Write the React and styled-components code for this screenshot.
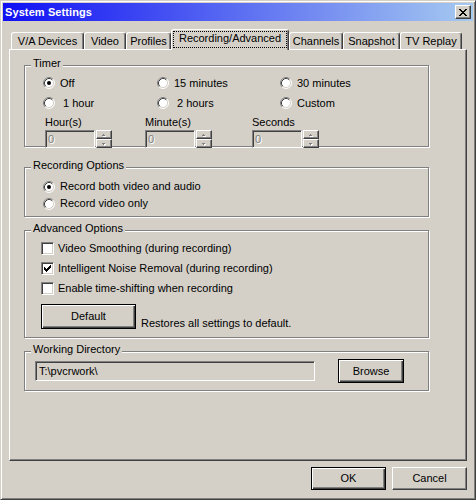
import React from 'react';
import styled, { createGlobalStyle, css } from 'styled-components';

const Global = createGlobalStyle`
  html, body { margin: 0; padding: 0; background: #d4d0c8; }
  body { font-family: "Liberation Sans", Arial, sans-serif; font-size: 11px; color: #000; }
  * { box-sizing: border-box; }
`;

const Window = styled.div`
  width: 476px;
  height: 500px;
  background: #d4d0c8;
  border: 1px solid;
  border-color: #d4d0c8 #404040 #404040 #d4d0c8;
  box-shadow: inset 1px 1px #fff, inset -1px -1px #808080;
  padding: 2px;
  display: flex;
  flex-direction: column;
`;

const TitleBar = styled.div`
  height: 18px;
  flex: none;
  display: flex;
  align-items: center;
  padding: 0 2px 0 2px;
  background: linear-gradient(to right, #1010f4, #a6caf0);
`;

const TitleText = styled.div`
  color: #fff;
  font-weight: bold;
  font-size: 11px;
  line-height: 13px;
  letter-spacing: 0.1px;
`;

const CloseBtn = styled.div`
  margin-left: auto;
  width: 16px;
  height: 14px;
  background: #d4d0c8;
  border: 1px solid;
  border-color: #fff #404040 #404040 #fff;
  box-shadow: inset -1px -1px #808080;
  display: flex;
  align-items: center;
  justify-content: center;
  padding-right: 1px;
`;

const TabStrip = styled.div`
  margin-top: 8px;
  display: flex;
  align-items: flex-end;
  padding-left: 8px;
  height: 20px;
  position: relative;
  z-index: 2;
`;

const Tab = styled.div`
  width: ${p => p.$w}px;
  height: ${p => (p.$active ? 21 : 17)}px;
  margin-bottom: ${p => (p.$active ? -1 : 0)}px;
  background: #d4d0c8;
  border-top: 1px solid #fff;
  border-left: 1px solid #fff;
  border-right: 1px solid #404040;
  border-radius: 3px 3px 0 0;
  box-shadow: inset -1px 0 #808080;
  padding: 1px 1px 0 1px;
  flex: none;
`;

const TabLabel = styled.div`
  border: 1px ${p => (p.$active ? 'dotted #000' : 'solid transparent')};
  line-height: 13px;
  text-align: center;
  padding-bottom: ${p => (p.$active ? 2 : 0)}px;
  white-space: nowrap;
`;

const Panel = styled.div`
  margin: 0 6px;
  height: 412px;
  flex: none;
  border-top: 1px solid #fff;
  border-left: 1px solid #fff;
  border-right: 1px solid #404040;
  border-bottom: 1px solid #404040;
  box-shadow: inset -1px -1px #808080;
  padding-left: 14px;
  display: flex;
  flex-direction: column;
`;

const Group = styled.div`
  position: relative;
  width: 405px;
  height: ${p => p.$h}px;
  margin-top: ${p => p.$mt}px;
  border: 1px solid #808080;
  box-shadow: inset 1px 1px #fff, 1px 1px #fff;
  padding: ${p => p.$pad};
  flex: none;
`;

const GroupLabel = styled.span`
  position: absolute;
  left: 6px;
  top: -9px;
  padding: 0 2px;
  background: #d4d0c8;
  line-height: 13px;
`;

const RadioGrid = styled.div`
  display: grid;
  grid-template-columns: ${p => p.$cols};
  grid-auto-rows: ${p => p.$row}px;
  padding-left: ${p => p.$pl}px;
`;

const Option = styled.label`
  display: flex;
  align-items: center;
  gap: ${p => p.$gap ?? 5}px;
  white-space: pre;
  line-height: 13px;
`;

const CheckRow = styled.div`
  display: flex;
  flex-direction: column;
  & > * { height: 20px; }
`;

const FieldsRow = styled.div`
  display: flex;
  margin-top: 3px;
  padding-left: 20px;
`;

const Field = styled.div`
  width: ${p => p.$w}px;
  display: flex;
  flex-direction: column;
  gap: 1px;
`;

const FieldLabel = styled.div`
  line-height: 13px;
`;

const SpinWrap = styled.div`
  display: flex;
  gap: 1px;
`;

const Edit = styled.div`
  width: ${p => p.$w}px;
  height: ${p => p.$h}px;
  border: 1px solid;
  border-color: #808080 #fff #fff #808080;
  box-shadow: inset 1px 1px #404040, inset -1px -1px #d4d0c8;
  background: #d4d0c8;
  padding-left: ${p => p.$pl}px;
  display: flex;
  align-items: center;
  line-height: 13px;
  ${p => p.$disabled && css`
    color: #808080;
    text-shadow: 1px 1px 0 #fff;
  `}
`;

const Spin = styled.div`
  display: flex;
  flex-direction: column;
  width: 16px;
  height: 18px;
`;

const SpinBtn = styled.div`
  height: 9px;
  background: #d4d0c8;
  border: 1px solid;
  border-color: #fff #404040 #404040 #fff;
  box-shadow: inset -1px -1px #808080;
  display: flex;
  align-items: center;
  justify-content: center;
`;

const Button = styled.button`
  font: inherit;
  color: #000;
  width: ${p => p.$w}px;
  height: ${p => p.$h}px;
  background: #d4d0c8;
  padding: 0;
  flex: none;
  line-height: 13px;
  ${p => p.$default ? css`
    border: 1px solid #000;
    box-shadow: inset 1px 1px #fff, inset -1px -1px #404040, inset -2px -2px #808080;
  ` : css`
    border: 1px solid;
    border-color: #fff #404040 #404040 #fff;
    box-shadow: inset -1px -1px #808080;
  `}
`;

const DefaultRow = styled.div`
  display: flex;
  align-items: flex-end;
  gap: 5px;
  margin-top: 6px;
`;

const Note = styled.span`
  line-height: 13px;
  margin-bottom: -1px;
`;

const DirRow = styled.div`
  display: flex;
  align-items: center;
  gap: 23px;
`;

const ButtonsRow = styled.div`
  margin-top: 6px;
  display: flex;
  justify-content: flex-end;
  gap: 6px;
  padding-right: 6px;
`;

const Pixels = ({ rows, color = '#000', w, h }) => (
  <svg width={w} height={h} viewBox={`0 0 ${w} ${h}`} shapeRendering="crispEdges">
    {rows.flatMap((r, y) =>
      r.split('').map((c, x) =>
        c === '#' ? <rect key={`${x}-${y}`} x={x} y={y} width="1" height="1" fill={color} /> : null
      )
    )}
  </svg>
);

const closeRows = [
  '##....##',
  '.##..##.',
  '..####..',
  '...##...',
  '..####..',
  '.##..##.',
  '##....##',
];

const checkRows = [
  '......#',
  '.....##',
  '#...###',
  '##.###.',
  '#####..',
  '.###...',
  '..#....',
];

const RadioSvg = styled.svg`
  flex: none;
`;

const RadioIcon = ({ checked }) => (
  <RadioSvg width="12" height="12" viewBox="0 0 12 12">
    <circle cx="6" cy="6" r="5" fill="#fff" />
    <path d="M2.11 9.89 A5.5 5.5 0 0 1 9.89 2.11" fill="none" stroke="#808080" />
    <path d="M9.89 2.11 A5.5 5.5 0 0 1 2.11 9.89" fill="none" stroke="#fff" />
    <path d="M2.82 9.18 A4.5 4.5 0 0 1 9.18 2.82" fill="none" stroke="#404040" />
    <path d="M9.18 2.82 A4.5 4.5 0 0 1 2.82 9.18" fill="none" stroke="#d4d0c8" />
    {checked && <circle cx="6" cy="6" r="2" fill="#000" />}
  </RadioSvg>
);

const CheckBox = styled.span`
  width: 13px;
  height: 13px;
  flex: none;
  background: #fff;
  border: 1px solid;
  border-color: #808080 #fff #fff #808080;
  box-shadow: inset 1px 1px #404040, inset -1px -1px #d4d0c8;
  display: flex;
  align-items: center;
  justify-content: center;
`;

const Check = ({ checked, children }) => (
  <Option $gap={4}>
    <CheckBox>{checked && <Pixels rows={checkRows} w={7} h={7} />}</CheckBox>
    <span>{children}</span>
  </Option>
);

const Radio = ({ checked, children }) => (
  <Option>
    <RadioIcon checked={checked} />
    <span>{children}</span>
  </Option>
);

const Arrow = ({ up }) => (
  <svg width="6" height="4" viewBox="0 0 6 4" shapeRendering="crispEdges">
    {up ? (
      <>
        <rect x="3" y="2" width="1" height="1" fill="#fff" />
        <rect x="2" y="3" width="3" height="1" fill="#fff" />
        <rect x="2" y="1" width="1" height="1" fill="#808080" />
        <rect x="1" y="2" width="3" height="1" fill="#808080" />
      </>
    ) : (
      <>
        <rect x="2" y="2" width="3" height="1" fill="#fff" />
        <rect x="3" y="3" width="1" height="1" fill="#fff" />
        <rect x="1" y="1" width="3" height="1" fill="#808080" />
        <rect x="2" y="2" width="1" height="1" fill="#808080" />
      </>
    )}
  </svg>
);

const SpinField = ({ label, w }) => (
  <Field $w={w}>
    <FieldLabel>{label}</FieldLabel>
    <SpinWrap>
      <Edit $w={50} $h={18} $pl={2} $disabled>0</Edit>
      <Spin>
        <SpinBtn><Arrow up /></SpinBtn>
        <SpinBtn><Arrow /></SpinBtn>
      </Spin>
    </SpinWrap>
  </Field>
);

const tabs = [
  ['V/A Devices', 73],
  ['Video', 42],
  ['Profiles', 45],
  ['Recording/Advanced', 118, true],
  ['Channels', 54],
  ['Snapshot', 57],
  ['TV Replay', 62],
];

export default function App() {
  return (
    <>
      <Global />
      <Window>
        <TitleBar>
          <TitleText>System Settings</TitleText>
          <CloseBtn><Pixels rows={closeRows} w={8} h={7} /></CloseBtn>
        </TitleBar>

        <TabStrip>
          {tabs.map(([t, w, a]) => (
            <Tab key={t} $w={w} $active={a}>
              <TabLabel $active={a}>{t}</TabLabel>
            </Tab>
          ))}
        </TabStrip>

        <Panel>
          <Group $h={82} $mt={15} $pad="7px 0 0 0">
            <GroupLabel>Timer</GroupLabel>
            <RadioGrid $cols="114px 123px auto" $row={20} $pl={18}>
              <Radio checked>Off</Radio>
              <Radio>15 minutes</Radio>
              <Radio>30 minutes</Radio>
              <Radio>{' 1 hour'}</Radio>
              <Radio>{' 2 hours'}</Radio>
              <Radio>Custom</Radio>
            </RadioGrid>
            <FieldsRow>
              <SpinField label="Hour(s)" w={100} />
              <SpinField label="Minute(s)" w={107} />
              <SpinField label="Seconds" w={80} />
            </FieldsRow>
          </Group>

          <Group $h={50} $mt={20} $pad="10px 0 0 0">
            <GroupLabel>Recording Options</GroupLabel>
            <RadioGrid $cols="auto" $row={17} $pl={18}>
              <Radio checked>Record both video and audio</Radio>
              <Radio>Record video only</Radio>
            </RadioGrid>
          </Group>

          <Group $h={108} $mt={13} $pad="7px 0 0 16px">
            <GroupLabel>Advanced Options</GroupLabel>
            <CheckRow>
              <Check>Video Smoothing (during recording)</Check>
              <Check checked>Intelligent Noise Removal (during recording)</Check>
              <Check>Enable time-shifting when recording</Check>
            </CheckRow>
            <DefaultRow>
              <Button $default $w={95} $h={25}>Default</Button>
              <Note>Restores all settings to default.</Note>
            </DefaultRow>
          </Group>

          <Group $h={40} $mt={13} $pad="7px 0 0 10px">
            <GroupLabel>Working Directory</GroupLabel>
            <DirRow>
              <Edit $w={280} $h={20} $pl={3}>T:\pvcrwork\</Edit>
              <Button $default $w={66} $h={24}>Browse</Button>
            </DirRow>
          </Group>
        </Panel>

        <ButtonsRow>
          <Button $default $w={75} $h={23}>OK</Button>
          <Button $w={75} $h={23}>Cancel</Button>
        </ButtonsRow>
      </Window>
    </>
  );
}
